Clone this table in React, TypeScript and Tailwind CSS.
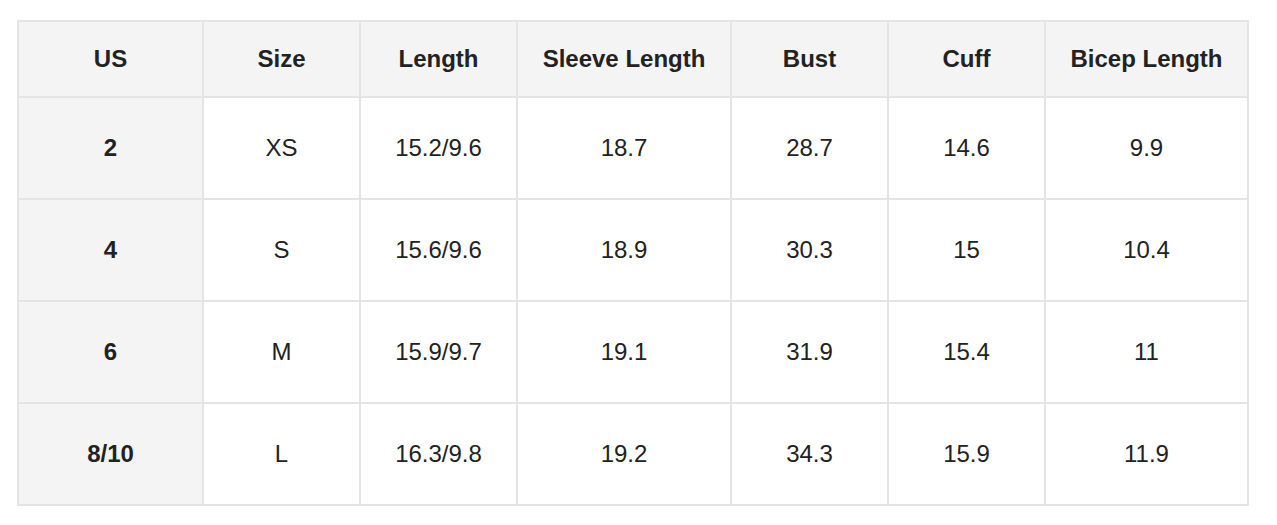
import React from "react";

const headers = ["US", "Size", "Length", "Sleeve Length", "Bust", "Cuff", "Bicep Length"];
const rows = [
  ["2", "XS", "15.2/9.6", "18.7", "28.7", "14.6", "9.9"],
  ["4", "S", "15.6/9.6", "18.9", "30.3", "15", "10.4"],
  ["6", "M", "15.9/9.7", "19.1", "31.9", "15.4", "11"],
  ["8/10", "L", "16.3/9.8", "19.2", "34.3", "15.9", "11.9"],
];

export default function App() {
  return (
    <div className="w-[1277px] h-[525px] bg-white pt-[20px] pl-[17px] font-['Liberation_Sans',Arial,sans-serif] text-[#222222]">
      <div className="inline-grid grid-cols-[183px_155px_155px_212px_155px_155px_201px] grid-rows-[74px_100px_100px_100px_100px] gap-[2px] p-[2px] bg-[#e4e4e4]">
        {headers.map((h) => (
          <div key={h} className="bg-[#f4f4f4] flex items-center justify-center text-[24px] font-bold">
            {h}
          </div>
        ))}
        {rows.map((r, i) =>
          r.map((c, j) => (
            <div
              key={`${i}-${j}`}
              className={
                j === 0
                  ? "bg-[#f4f4f4] flex items-center justify-center text-[24px] font-bold"
                  : "bg-white flex items-center justify-center text-[24px]"
              }
            >
              {c}
            </div>
          ))
        )}
      </div>
    </div>
  );
}
